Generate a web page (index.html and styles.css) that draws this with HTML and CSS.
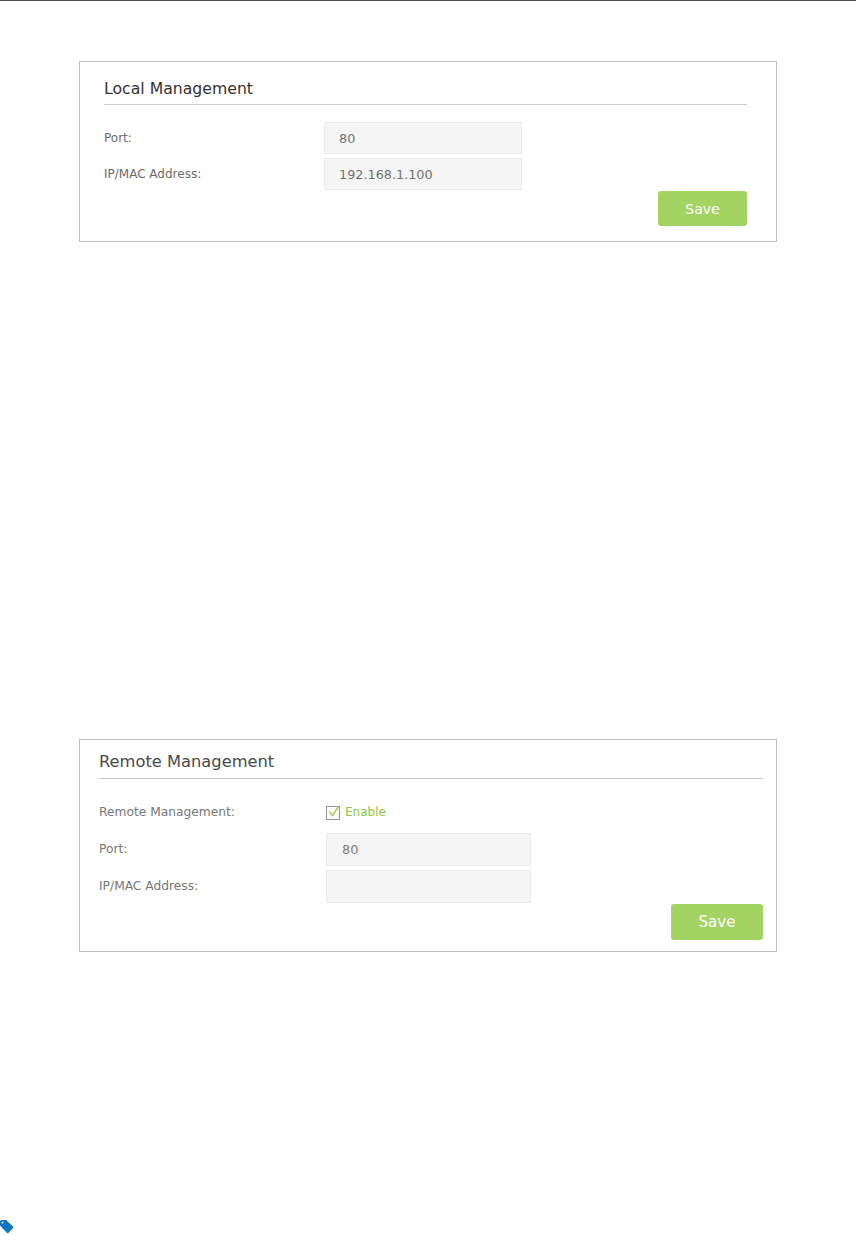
FILE: index.html
```html
<!DOCTYPE html>
<html lang="en">
<head>
    <meta charset="UTF-8">
    <title>Local and Remote Management</title>
    <link rel="stylesheet" href="styles.css">
</head>
<body>
    <div class="page">
        <section class="panel panel-local">
            <h2 class="panel-title">Local Management</h2>
            <div class="row">
                <span class="row-label">Port:</span>
                <div class="field">80</div>
            </div>
            <div class="row">
                <span class="row-label">IP/MAC Address:</span>
                <div class="field">192.168.1.100</div>
            </div>
            <div class="actions">
                <button class="btn">Save</button>
            </div>
        </section>

        <section class="panel panel-remote">
            <h2 class="panel-title">Remote Management</h2>
            <div class="row row-check">
                <span class="row-label">Remote Management:</span>
                <span class="check">
                    <svg class="check-box" width="15" height="15" viewBox="0 0 15 15">
                        <rect x="0.5" y="1.5" width="13" height="13" fill="#fff" stroke="#949494"/>
                        <path d="M3 6.5 L6.5 10.5 L12.5 1.5" fill="none" stroke="#9ccb5a" stroke-width="1.4"/>
                    </svg>
                    Enable
                </span>
            </div>
            <div class="row">
                <span class="row-label">Port:</span>
                <div class="field">80</div>
            </div>
            <div class="row">
                <span class="row-label">IP/MAC Address:</span>
                <div class="field"></div>
            </div>
            <div class="actions">
                <button class="btn">Save</button>
            </div>
        </section>

        <svg class="tag" width="14" height="13" viewBox="0 0 14 13">
            <path d="M0 1 L1 0 L6 0 L13 6.5 L13 8 L8.5 13 L7 13 L0 5.5 Z" fill="#0a76c4"/>
            <circle cx="2.5" cy="2.5" r="1" fill="#fff"/>
        </svg>
    </div>
</body>
</html>
```

FILE: styles.css
```css
* {
    box-sizing: border-box;
}
body {
    margin: 0;
    background: #fff;
    font-family: 'DejaVu Sans', sans-serif;
    color: #6b6b6b;
}
.page {
    height: 1235px;
    border-top: 1px solid #4d4d4d;
    padding-top: 60px;
    overflow: hidden;
}
.panel {
    width: 698px;
    margin-left: 79px;
    border: 1px solid #bdbdbd;
}
.panel-local {
    height: 181px;
    padding: 0 29px 0 24px;
}
.panel-remote {
    height: 213px;
    margin-top: 497px;
    padding: 0 13px 0 19px;
    color: #777;
}
.panel-title {
    margin: 0;
    font-weight: 400;
    color: #333;
    border-bottom: 1px solid #c8c8c8;
}
.panel-local .panel-title {
    height: 43px;
    padding-top: 16px;
    margin-bottom: 17px;
    font-size: 15.7px;
    line-height: 22px;
}
.panel-remote .panel-title {
    height: 39px;
    padding-top: 10px;
    margin-bottom: 21px;
    font-size: 16.3px;
    line-height: 24px;
    color: #4a4a4a;
}
.row {
    display: flex;
    align-items: center;
    margin-bottom: 4px;
    font-size: 12px;
}
.row-label {
    flex: none;
}
.panel-local .row-label {
    width: 220px;
}
.panel-remote .row-label {
    width: 227px;
    margin-bottom: 2px;
    font-size: 12.25px;
}
.field {
    background: #f5f5f5;
    border: 1px solid #ebebeb;
    font-size: 13px;
    color: #707070;
}
.panel-local .field {
    width: 198px;
    height: 32px;
    padding-left: 14px;
    line-height: 32px;
    font-size: 12.8px;
}
.panel-remote .field {
    width: 205px;
    height: 33px;
    padding-left: 15px;
    line-height: 32px;
    color: #808080;
}
.panel-remote .row-check {
    height: 24px;
    margin-bottom: 9px;
}
.panel-remote .row-check .row-label {
    margin-bottom: 0;
}
.check {
    display: flex;
    align-items: center;
    gap: 4px;
    color: #8cc63f;
}
.actions {
    display: flex;
    justify-content: flex-end;
}
.btn {
    border: none;
    border-radius: 3px;
    background: #a2d363;
    color: #fff;
    font-family: inherit;
}
.panel-local .btn {
    width: 89px;
    height: 35px;
    margin-top: -3px;
    font-size: 14px;
}
.panel-remote .btn {
    width: 92px;
    height: 36px;
    margin-top: -3px;
    font-size: 15px;
}
.tag {
    display: block;
    margin-top: 268px;
}
```
